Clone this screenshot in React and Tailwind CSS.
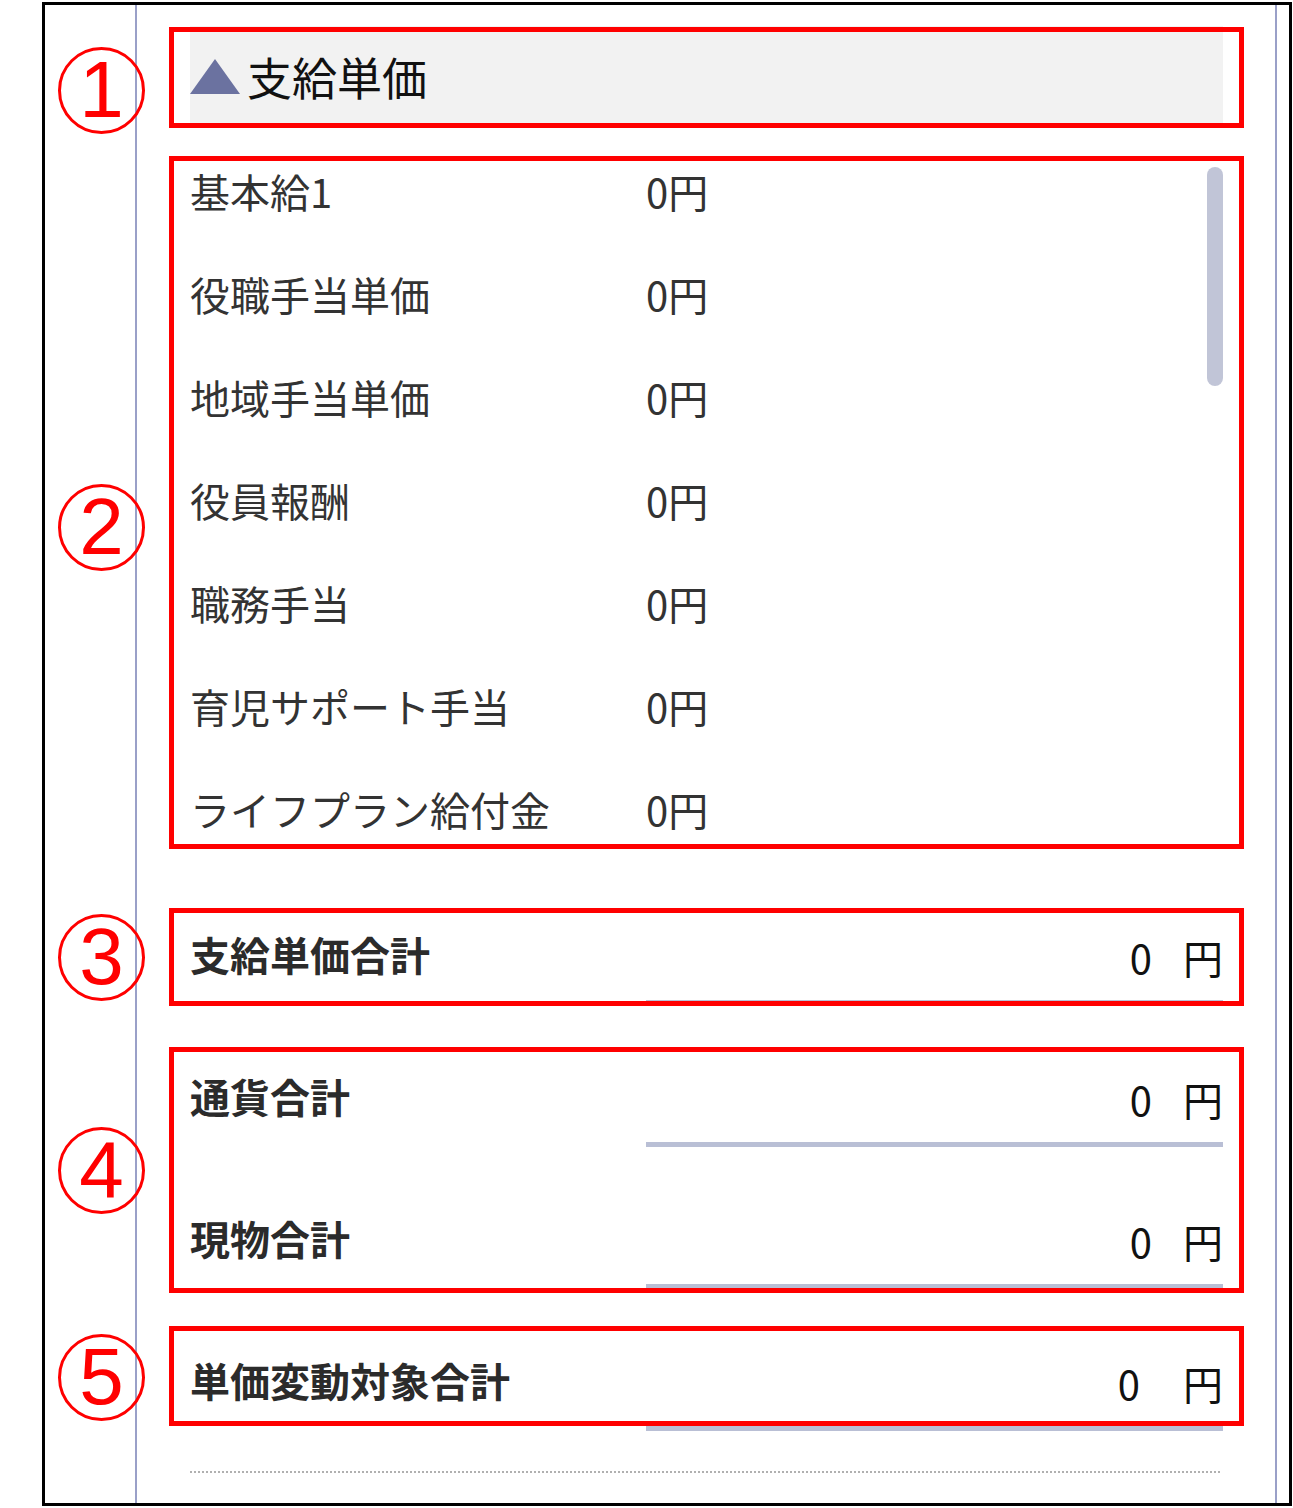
import React from 'react';

const jp = { fontFamily: '"Noto Sans CJK JP", "Noto Sans", sans-serif' };

const items = [
    '基本給1',
    '役職手当単価',
    '地域手当単価',
    '役員報酬',
    '職務手当',
    '育児サポート手当',
    'ライフプラン給付金',
];

// annotation overlays: red frames and circled numbers
const marks = [
    { n: '1', box: 'top-[27px] h-[101px]', circle: 'top-[47px]' },
    { n: '2', box: 'top-[156px] h-[693px]', circle: 'top-[484px]' },
    { n: '3', box: 'top-[908px] h-[98px]', circle: 'top-[914px]' },
    { n: '4', box: 'top-[1047px] h-[246px]', circle: 'top-[1127px]' },
    { n: '5', box: 'top-[1326px] h-[100px]', circle: 'top-[1334px]' },
];

function TotalRow({ label, gap = 'mr-[31px]', className = '' }) {
    return (
        <div className={`flex h-[142px] items-end ${className}`}>
            <div className="w-[456px] mb-[27px] text-[40px] leading-[48px] font-bold text-[#2b2b2b]">{label}</div>
            <div className="flex-1 flex justify-end items-center pb-[19px] border-b-[5px] border-[#b9bfd5] text-[40px] leading-[48px] text-[#111]">
                <span className={gap}>0</span>
                <span>円</span>
            </div>
        </div>
    );
}

export default function App() {
    return (
        <div className="relative w-[1293px] h-[1508px] bg-white" style={jp}>
            <div className="ml-[42px] pt-[2px]">
                <div className="flex w-[1250px] h-[1504px] border-[3px] border-black">
                    <div className="w-[90px]" />
                    <div className="w-[2px] bg-[#9aa0c8]" />
                    <div className="w-[1138px] pl-[53px] pr-[52px] pt-[21px]">
                        {/* header */}
                        <div className="flex items-center h-[99px] bg-[#f2f2f2] pt-[2px]">
                            <svg width="50" height="35" viewBox="0 0 50 35" className="mr-[7px]">
                                <polygon points="25,0 50,35 0,35" fill="#6b72a0" />
                            </svg>
                            <span className="text-[45px] leading-none text-[#111]">支給単価</span>
                        </div>

                        {/* scroll list */}
                        <div className="flex mt-[17px] h-[704px]">
                            <div className="flex-1 overflow-hidden">
                                {items.map((label) => (
                                    <div key={label} className="flex items-center h-[103px] pb-[6px] text-[40px] text-[#333]">
                                        <div className="w-[456px]">{label}</div>
                                        <div>0円</div>
                                    </div>
                                ))}
                            </div>
                            <div className="w-[16px] pt-[25px]">
                                <div className="h-[219px] rounded-full bg-[#c1c5d7]" />
                            </div>
                        </div>

                        <TotalRow label="支給単価合計" className="mt-[17px]" />
                        <TotalRow label="通貨合計" />
                        <TotalRow label="現物合計" />
                        <TotalRow label="単価変動対象合計" gap="mr-[43px]" />

                        <div className="mt-[40px] mr-[3px] border-t-[2px] border-dotted border-[#b0b0b0]" />
                    </div>
                    <div className="w-[2px] bg-[#9aa0c8]" />
                    <div className="flex-1" />
                </div>
            </div>

            {marks.map((m) => (
                <React.Fragment key={m.n}>
                    <div className={`absolute left-[169px] w-[1075px] border-[5px] border-[#ff0000] ${m.box}`} />
                    <div
                        className={`absolute left-[58px] w-[87px] h-[87px] rounded-full border-[3px] border-[#ff0000] flex items-center justify-center text-[#ff0000] text-[80px] leading-none ${m.circle}`}
                        style={{ fontFamily: '"Liberation Sans", Arial, sans-serif' }}
                    >
                        <span className="-mt-[2px]">{m.n}</span>
                    </div>
                </React.Fragment>
            ))}
        </div>
    );
}
